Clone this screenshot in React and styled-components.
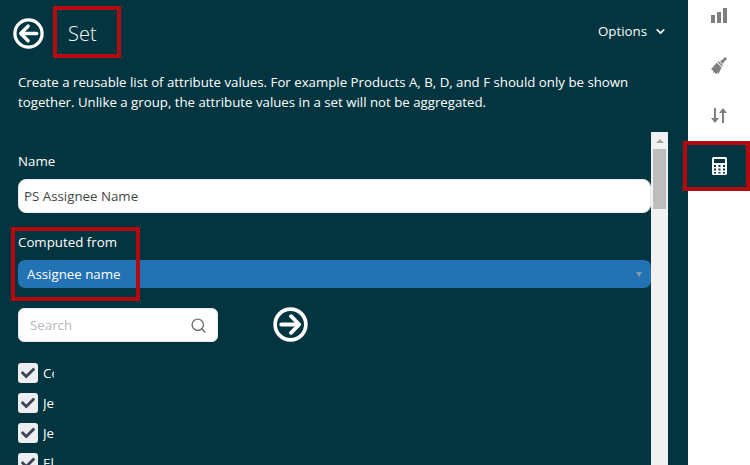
import React from 'react';
import styled, {createGlobalStyle} from 'styled-components';
import {FaCheck} from 'react-icons/fa';
import {Search, ChevronDown} from 'lucide-react';

const GlobalStyle = createGlobalStyle`
  html, body {
    margin: 0;
    height: 465px;
    overflow: hidden;
    background: #fff;
    font-family: "Open Sans", "Liberation Sans", sans-serif;
  }
`;
const Page = styled.div`
  display: flex;
  width: 750px;
  height: 465px;
  position: relative;
  overflow: hidden;
`;
const Panel = styled.div`
  width: 688px;
  height: 465px;
  background: #02353f;
  color: #fff;
  display: flex;
  flex-direction: column;
  flex-shrink: 0;
`;
const Header = styled.div`
  display: flex;
  align-items: center;
  height: 66px;
  padding: 0 21px 0 13px;
  flex-shrink: 0;
`;
const Title = styled.div`
  font-size: 20px;
  font-weight: 300;
  margin-left: 24px;
  flex: 1;
`;
const Options = styled.div`
  display: flex;
  align-items: center;
  gap: 7px;
  font-size: 13.3px;
  margin-bottom: 4px;
`;
const Intro = styled.p`
  margin: 6px 0 0;
  padding: 0 18px;
  font-size: 13.25px;
  line-height: 20px;
  height: 60px;
  flex-shrink: 0;
`;
const ScrollArea = styled.div`
  display: flex;
  flex: 1;
  min-height: 0;
  padding-right: 20px;
`;
const Form = styled.div`
  flex: 1;
  padding: 1px 0 0 18px;
  overflow: hidden;
`;
const Label = styled.div`
  font-size: 13.3px;
  line-height: 18px;
  margin-top: ${p => p.$top}px;
`;
const NameInput = styled.div`
  height: 34px;
  margin-top: 9px;
  background: #fff;
  border-radius: 8px;
  border: 1px solid #e6ebee;
  box-sizing: border-box;
  color: #444;
  font-size: 13.3px;
  line-height: 32px;
  padding-left: 5px;
`;
const Select = styled.div`
  height: 28px;
  margin-top: 9px;
  background: #2272b4;
  border-radius: 7px;
  display: flex;
  align-items: center;
  justify-content: space-between;
  font-size: 13.3px;
  padding: 0 9px;
`;
const Caret = styled.span`
  width: 0;
  height: 0;
  border-left: 3px solid transparent;
  border-right: 3px solid transparent;
  border-top: 5px solid #8a9aa6;
`;
const SearchRow = styled.div`
  display: flex;
  align-items: center;
  margin-top: 19px;
`;
const SearchBox = styled.div`
  width: 200px;
  height: 34px;
  background: #fff;
  border: 1px solid #e4e8ec;
  border-radius: 6px;
  box-sizing: border-box;
  display: flex;
  align-items: center;
  justify-content: space-between;
  padding: 1px 10px 0 11px;
  color: #b4b8bd;
  font-size: 13.3px;
`;
const GoButton = styled.div`
  margin-left: 55px;
  display: flex;
`;
const CheckList = styled.div`
  margin-top: 21px;
  display: flex;
  flex-direction: column;
  gap: 10px;
`;
const CheckRow = styled.div`
  display: flex;
  align-items: center;
  height: 20px;
`;
const CheckBox = styled.span`
  width: 20px;
  height: 20px;
  border-radius: 3px;
  background: #edeef2;
  color: #3c4354;
  display: flex;
  align-items: center;
  justify-content: center;
  font-size: 14px;
  flex-shrink: 0;
`;
const CheckText = styled.span`
  width: 11px;
  margin-left: 5px;
  overflow: hidden;
  white-space: nowrap;
  font-size: 13.3px;
`;
const ScrollBar = styled.div`
  width: 17px;
  background: #f1f1f1;
  display: flex;
  flex-direction: column;
  align-items: center;
  flex-shrink: 0;
`;
const ScrollUp = styled.div`
  height: 17px;
  display: flex;
  align-items: center;
  justify-content: center;
  width: 100%;
  &::before {
    content: "";
    border-left: 4px solid transparent;
    border-right: 4px solid transparent;
    border-bottom: 4px solid #a3a3a3;
  }
`;
const ScrollThumb = styled.div`
  width: 13px;
  height: 60px;
  background: #bdbdbd;
`;
const Rail = styled.div`
  width: 62px;
  margin-top: -9px;
  display: flex;
  flex-direction: column;
  align-items: center;
  background: #fff;
  color: #7f7f7f;
`;
const RailItem = styled.div`
  width: 100%;
  height: 50px;
  display: flex;
  align-items: center;
  justify-content: center;
  background: ${p => p.$active ? '#02353f' : 'transparent'};
  color: ${p => p.$active ? '#fff' : 'inherit'};
`;
const Highlight = styled.div`
  position: absolute;
  left: ${p => p.$x}px;
  top: ${p => p.$y}px;
  width: ${p => p.$w}px;
  height: ${p => p.$h}px;
  border: 4px solid #b30a0f;
  box-sizing: border-box;
`;

const CircleArrow = ({flip, size}) => (
  <svg width={size} height={size} viewBox="0 0 36 36" fill="none" stroke="#fff">
    <circle cx="18" cy="18" r="15.8" strokeWidth="3.8" />
    <g transform={flip ? 'rotate(180 18 18)' : undefined} strokeWidth="4" strokeLinecap="round" strokeLinejoin="round">
      <path d="M8.5 18H26" />
      <path d="M18.5 9.5L27 18L18.5 26.5" />
    </g>
  </svg>
);

const BarsIcon = () => (
  <svg width="16" height="16" viewBox="0 0 16 16" fill="currentColor">
    <rect x="0" y="7" width="4" height="8" />
    <rect x="6" y="4" width="4" height="11" />
    <rect x="12" y="0" width="4" height="15" />
  </svg>
);

const BrushIcon = () => (
  <svg width="16" height="18" viewBox="0 0 16 18" fill="currentColor">
    <path d="M14.4 0L16 1.6L11.6 7L9 4.4Z" />
    <path d="M7.6 4.2L12 8.6L11 9.6L6.6 5.2Z" />
    <path d="M5.8 5.8L10.6 10.6L7.4 17L6.2 15.6L5 17.4L3.8 15.4L2.2 15.8L2.4 13.8L0 12.2Z" />
  </svg>
);

const SortIcon = () => (
  <svg width="16" height="16" viewBox="0 0 16 16" fill="currentColor">
    <path d="M3 0H5V10H8L4 15L0 10H3Z" />
    <path d="M11 15H13V5H16L12 0L8 5H11Z" />
  </svg>
);

const CalcIcon = () => (
  <svg width="15" height="18" viewBox="0 0 15 18" fill="currentColor">
    <path fillRule="evenodd" d="M1.5 0H13.5A1.5 1.5 0 0 1 15 1.5V16.5A1.5 1.5 0 0 1 13.5 18H1.5A1.5 1.5 0 0 1 0 16.5V1.5A1.5 1.5 0 0 1 1.5 0ZM2 2V6H13V2ZM2 8V10H4V8ZM6.5 8V10H8.5V8ZM11 8V10H13V8ZM2 11.5V13.5H4V11.5ZM6.5 11.5V13.5H8.5V11.5ZM11 11.5V13.5H13V11.5ZM2 15V16.5H4V15ZM6.5 15V16.5H8.5V15ZM11 15V16.5H13V15Z" />
  </svg>
);

const names = ['Corey', 'Jeff', 'Jenny', 'Elena'];

function App() {
  return (
    <Page>
      <GlobalStyle />
      <Panel>
        <Header>
          <CircleArrow flip size={31} />
          <Title>Set</Title>
          <Options>Options <ChevronDown size={13} strokeWidth={3} /></Options>
        </Header>
        <Intro>
          Create a reusable list of attribute values. For example Products A, B, D, and F should only be shown
          together. Unlike a group, the attribute values in a set will not be aggregated.
        </Intro>
        <ScrollArea>
          <Form>
            <Label $top={19}>Name</Label>
            <NameInput>PS Assignee Name</NameInput>
            <Label $top={20}>Computed from</Label>
            <Select>Assignee name <Caret /></Select>
            <SearchRow>
              <SearchBox>Search <Search size={17} color="#6d7277" /></SearchBox>
              <GoButton><CircleArrow size={35} /></GoButton>
            </SearchRow>
            <CheckList>
              {names.map(n => (
                <CheckRow key={n}>
                  <CheckBox><FaCheck /></CheckBox>
                  <CheckText>{n}</CheckText>
                </CheckRow>
              ))}
            </CheckList>
          </Form>
          <ScrollBar>
            <ScrollUp />
            <ScrollThumb />
          </ScrollBar>
        </ScrollArea>
      </Panel>
      <Rail>
        <RailItem><BarsIcon /></RailItem>
        <RailItem><BrushIcon /></RailItem>
        <RailItem><SortIcon /></RailItem>
        <RailItem $active><CalcIcon /></RailItem>
      </Rail>
      <Highlight $x={53} $y={6} $w={68} $h={52} />
      <Highlight $x={683} $y={141} $w={67} $h={50} />
      <Highlight $x={11} $y={227} $w={129} $h={74} />
    </Page>
  );
}

export default App;
